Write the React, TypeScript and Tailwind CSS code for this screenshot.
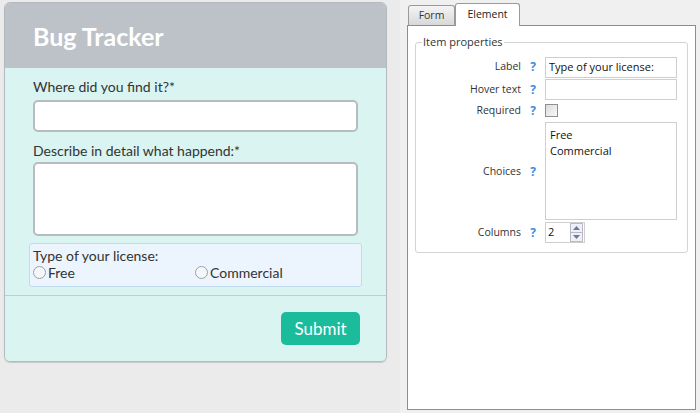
import React from 'react';

const lato = { fontFamily: 'Lato, "Open Sans", sans-serif' };

const Help: React.FC = () => <span className="text-[#3b8fe0] font-bold text-[12px] w-[24px] text-center">?</span>;

const PropRow: React.FC<{ label: string; h: string; children: React.ReactNode }> = ({ label, h, children }) => (
  <div className={`flex items-center ${h}`}>
    <div className="w-[99px] text-right text-[#333]">{label}</div>
    <div className="w-[24px] flex justify-center">
      <Help />
    </div>
    {children}
  </div>
);

export default function App() {
  return (
    <div className="w-[700px] h-[413px] bg-[#ebebeb] flex overflow-hidden">
      {/* bug tracker card */}
      <div className="w-[400px] pl-[4px] pt-[2px]" style={lato}>
        <div className="w-[383px] h-[360px] rounded-[6px] border border-[#b4babd] overflow-hidden shadow-[0_1px_1px_rgba(0,0,0,0.15)] flex flex-col">
          <div className="h-[65px] bg-[#bcc2c8] pl-[28px] pt-[18px] shrink-0">
            <h1 className="text-white text-[25px] font-bold leading-[30px]">Bug Tracker</h1>
          </div>
          <div className="flex-1 bg-[#d9f4f1] flex flex-col">
            <div className="px-[28px] pt-[10px] pb-[8px] flex flex-col">
              <label className="text-[14px] text-[#333] leading-[18px]">Where did you find it?*</label>
              <div className="mt-[4px] h-[32px] rounded-[5px] border-2 border-[#b7bcbe] bg-white" />
              <label className="mt-[10px] text-[14px] text-[#333] leading-[18px]">Describe in detail what happend:*</label>
              <div className="mt-[2px] h-[74px] rounded-[5px] border-2 border-[#b7bcbe] bg-white" />
              <div className="mt-[7px] -mx-[4px] h-[44px] rounded-[3px] border border-[#bfdcee] bg-[#ecf5fd] px-[3px] pt-[3px] text-[14px] text-[#333] leading-[17px]">
                <div>Type of your license:</div>
                <div className="flex">
                  <div className="w-[162px] flex items-center">
                    <span className="w-[13px] h-[13px] rounded-full border border-[#9aa2a8] bg-[#f4f6f8]" />
                    <span className="ml-[2px]">Free</span>
                  </div>
                  <div className="flex items-center">
                    <span className="w-[13px] h-[13px] rounded-full border border-[#9aa2a8] bg-[#f4f6f8]" />
                    <span className="ml-[2px]">Commercial</span>
                  </div>
                </div>
              </div>
            </div>
            <div className="border-t border-[#c3cdcd] flex justify-end pr-[26px] pt-[16px]">
              <button className="w-[79px] h-[33px] rounded-[5px] bg-[#1abc9c] text-white text-[17px] leading-none">Submit</button>
            </div>
          </div>
        </div>
      </div>

      {/* properties panel */}
      <div className="flex-1 bg-[#f0f0f0] pl-[7px] pt-[2px] pr-[4px] text-[10.5px]" style={{ fontFamily: '"Open Sans", "DejaVu Sans", sans-serif' }}>
        <div className="flex items-end h-[23px] pl-[1px]">
          <div className="h-[20px] w-[47px] border border-[#9a9a9a] border-b-0 rounded-t-[3px] bg-gradient-to-b from-[#f4f4f4] to-[#d8d8d8] flex items-center justify-center text-[#333]">
            Form
          </div>
          <div className="h-[23px] w-[65px] border border-[#9a9a9a] border-b-0 rounded-t-[3px] bg-white flex items-center justify-center text-[#222] -mb-px relative z-10">
            Element
          </div>
        </div>
        <div className="h-[385px] border border-[#8d8d8d] bg-white px-[7px] pt-[8px]">
          <fieldset className="border border-[#d4d4d4] rounded-[3px] pl-[6px] pb-[8px]">
            <legend className="px-[1px] text-[#333] text-[11px]">Item properties</legend>
            <div className="flex flex-col pt-[5px]">
              <PropRow label="Label" h="h-[23px]">
                <div className="w-[132px] h-[21px] border border-[#cfcfcf] px-[3px] flex items-center text-[#111] text-[11px]">Type of your license:</div>
              </PropRow>
              <PropRow label="Hover text" h="h-[22px]">
                <div className="w-[132px] h-[21px] border border-[#cfcfcf]" />
              </PropRow>
              <PropRow label="Required" h="h-[20px]">
                <div className="w-[13px] h-[13px] border border-[#8f8f8f] bg-gradient-to-br from-[#dcdcdc] to-[#f8f8f8]" />
              </PropRow>
              <div className="flex items-center h-[100px] mt-[1px]">
                <div className="w-[99px] text-right text-[#333]">Choices</div>
                <div className="w-[24px] flex justify-center">
                  <Help />
                </div>
                <div className="w-[132px] h-[98px] border border-[#cfcfcf] px-[4px] pt-[4px] text-[#111] text-[11px] leading-[16px] self-start">
                  <div>Free</div>
                  <div>Commercial</div>
                </div>
              </div>
              <PropRow label="Columns" h="h-[22px]">
                <div className="w-[40px] h-[21px] border border-[#cfcfcf] flex items-center text-[#111] text-[11px]">
                  <span className="flex-1 pl-[2px]">2</span>
                  <div className="w-[13px] h-[19px] mr-[1px] flex flex-col border border-[#b8b8c8]">
                    <div className="flex-1 bg-[#eef0f6] border-b border-[#b8b8c8] flex items-center justify-center">
                      <svg width="7" height="4" viewBox="0 0 7 4"><path d="M0 4 L3.5 0 L7 4 Z" fill="#6b7896" /></svg>
                    </div>
                    <div className="flex-1 bg-[#eef0f6] flex items-center justify-center">
                      <svg width="7" height="4" viewBox="0 0 7 4"><path d="M0 0 L3.5 4 L7 0 Z" fill="#6b7896" /></svg>
                    </div>
                  </div>
                </div>
              </PropRow>
            </div>
          </fieldset>
        </div>
      </div>
    </div>
  );
}
